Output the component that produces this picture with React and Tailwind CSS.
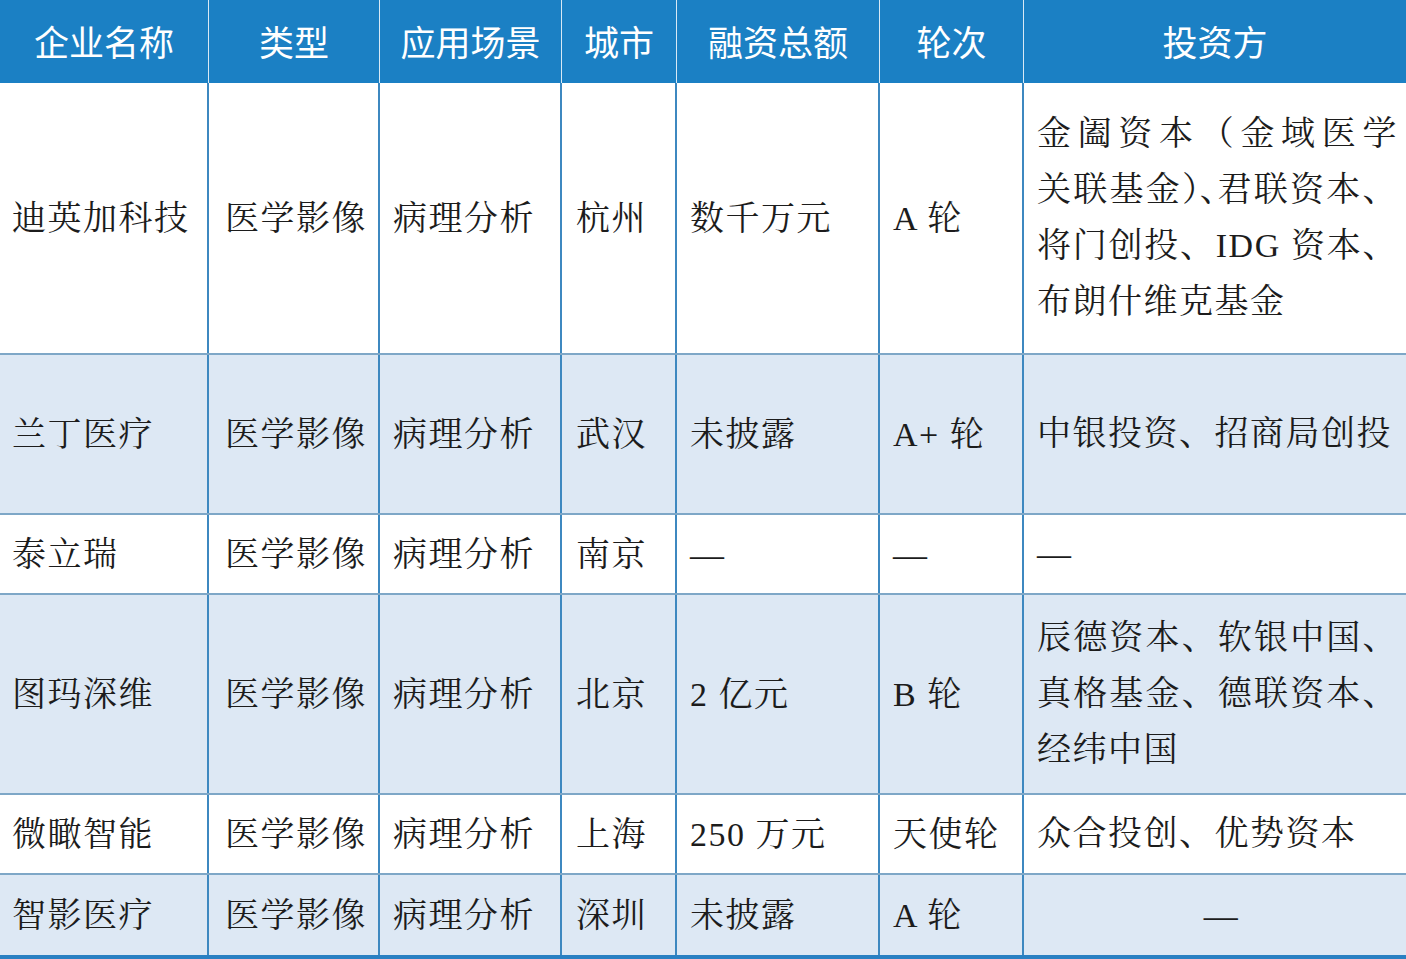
import React from "react";

const cols = "grid-cols-[209px_171px_182px_115px_203px_144px_382px]";

const headers = ["企业名称", "类型", "应用场景", "城市", "融资总额", "轮次", "投资方"];

const rows = [
  {
    h: "h-[270px]",
    bg: "bg-white",
    cells: ["迪英加科技", "医学影像", "病理分析", "杭州", "数千万元", "A 轮"],
    inv: ["金阖资本（金域医学", "关联基金）、君联资本、", "将门创投、IDG 资本、", "布朗什维克基金"],
  },
  {
    h: "h-[160px]",
    bg: "bg-[#dde8f4]",
    cells: ["兰丁医疗", "医学影像", "病理分析", "武汉", "未披露", "A+ 轮"],
    inv: ["中银投资、招商局创投"],
  },
  {
    h: "h-[80px]",
    bg: "bg-white",
    cells: ["泰立瑞", "医学影像", "病理分析", "南京", "—", "—"],
    inv: ["—"],
  },
  {
    h: "h-[200px]",
    bg: "bg-[#dde8f4]",
    cells: ["图玛深维", "医学影像", "病理分析", "北京", "2 亿元", "B 轮"],
    inv: ["辰德资本、软银中国、", "真格基金、德联资本、", "经纬中国"],
  },
  {
    h: "h-[80px]",
    bg: "bg-white",
    cells: ["微瞰智能", "医学影像", "病理分析", "上海", "250 万元", "天使轮"],
    inv: ["众合投创、优势资本"],
  },
  {
    h: "h-[82px]",
    bg: "bg-[#dde8f4]",
    cells: ["智影医疗", "医学影像", "病理分析", "深圳", "未披露", "A 轮"],
    inv: ["—"],
    center: true,
  },
];

const pads = ["pl-[12px]", "pl-[16px]", "pl-[13px]", "pl-[14px]", "pl-[13px]", "pl-[13px]"];

// the print sets "）、" at half width
function Line({ text }) {
  const parts = text.split(/(）、)/);
  return parts.map((p, i) =>
    p === "）、" ? (
      <span key={i} className="[font-feature-settings:'halt'] tracking-normal">
        {p}
      </span>
    ) : (
      <span key={i}>{p}</span>
    )
  );
}

function Investors({ lines, center }) {
  if (center) {
    return <div className="w-full text-center">{lines[0]}</div>;
  }
  return (
    <div className="w-full pr-[8px]">
      {lines.map((l, i) => (
        <div
          key={i}
          className={
            "leading-[56px] whitespace-nowrap " +
            (i < lines.length - 1 ? "text-justify [text-align-last:justify]" : "")
          }
        >
          <Line text={l} />
        </div>
      ))}
    </div>
  );
}

export default function App() {
  return (
    <div className="w-[1406px] h-[959px] bg-white overflow-hidden">
      {/* header */}
      <div className={"grid h-[83px] bg-[#1b80c4] " + cols}>
        {headers.map((t, i) => (
          <div
            key={t}
            className={
              "flex items-center justify-center text-white text-[35px] font-['Noto_Sans_CJK_SC',sans-serif] " +
              (i < headers.length - 1 ? "border-r border-[#d8e9f5]" : "")
            }
          >
            {t}
          </div>
        ))}
      </div>

      {/* body */}
      <div className="font-['Liberation_Serif','Noto_Serif_CJK_SC','Noto_Sans_CJK_SC',serif] text-[34px] text-[#1c1c1c] tracking-[1.5px] border-b-4 border-[#2a80c2]">
        {rows.map((r, ri) => (
          <div
            key={ri}
            className={
              "grid " + cols + " " + r.h + " " + r.bg + " " +
              (ri > 0 ? "border-t-2 border-[#7ea7c7]" : "")
            }
          >
            {r.cells.map((c, ci) => (
              <div
                key={ci}
                className={"flex items-center border-r-2 border-[#3d88c0] " + pads[ci]}
              >
                {c}
              </div>
            ))}
            <div className="flex items-center pl-[13px]">
              <Investors lines={r.inv} center={r.center} />
            </div>
          </div>
        ))}
      </div>
    </div>
  );
}
